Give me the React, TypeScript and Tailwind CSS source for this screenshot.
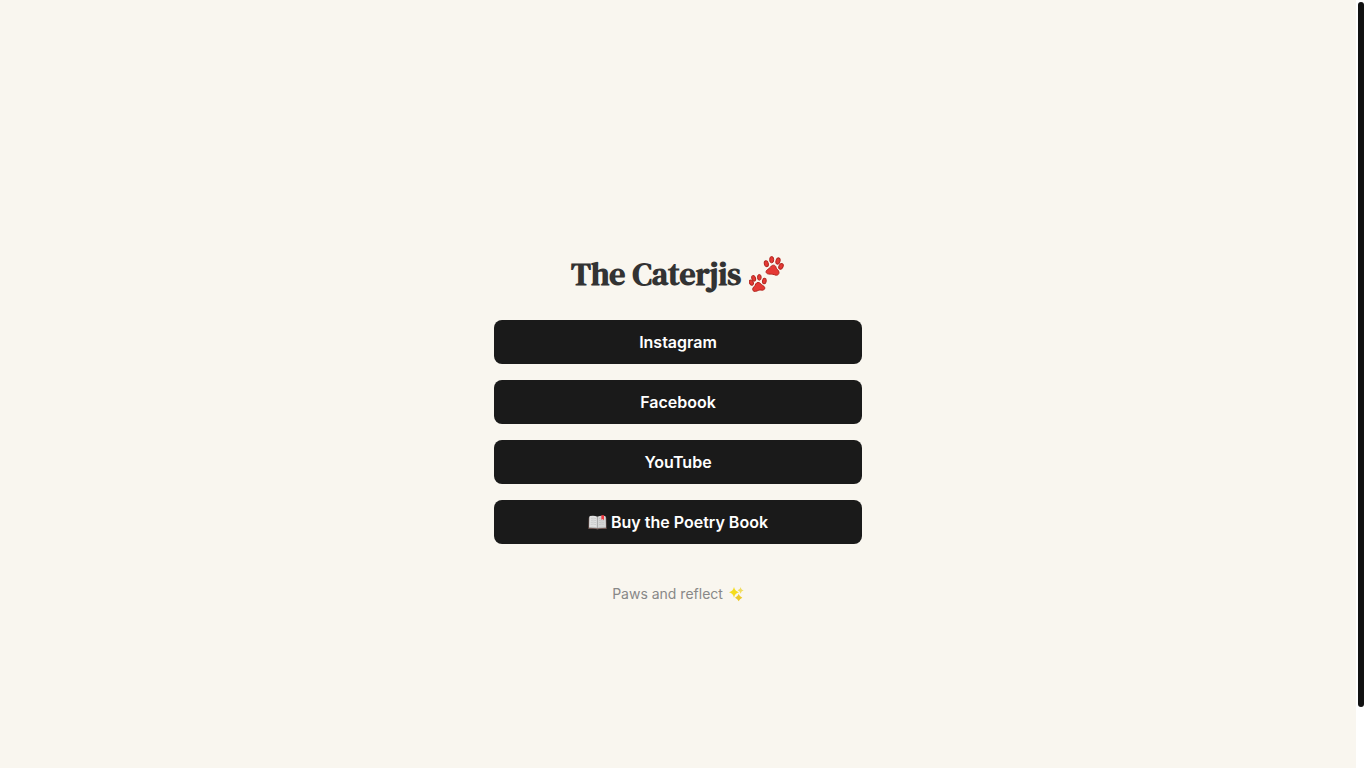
import React from 'react';

const PawPrints: React.FC = () => (
  <svg role="img" aria-label="Paw prints" viewBox="30 18 108 108" className="size-9 shrink-0">
    <g fill="#e53935" stroke="#b3261f" strokeWidth="3" strokeLinejoin="round">
      <ellipse cx="82" cy="41" rx="6" ry="9" transform="rotate(-12 82 41)" />
      <ellipse cx="98" cy="29" rx="6" ry="9.5" />
      <ellipse cx="117" cy="33" rx="6" ry="9.5" transform="rotate(16 117 33)" />
      <ellipse cx="126" cy="49" rx="6" ry="9" transform="rotate(26 126 49)" />
      <path d="M97 48C103 43 110 46 111 52C112 58 120 61 120 67C120 76 112 77 106 74C99 72 95 73 90 72C82 72 79 66 83 61C87 57 93 55 97 48Z" />
      <ellipse cx="37" cy="98" rx="5.5" ry="8" transform="rotate(-28 37 98)" />
      <ellipse cx="44" cy="85" rx="5.5" ry="8.5" transform="rotate(-18 44 85)" />
      <ellipse cx="61" cy="82" rx="5.5" ry="8.5" />
      <ellipse cx="76" cy="93" rx="5.5" ry="8.5" transform="rotate(8 76 93)" />
      <path d="M50 102C53 96 61 96 65 101C68 106 75 107 77 112C79 119 72 122 66 120C60 119 56 123 50 124C43 126 39 120 42 114C44 110 49 108 50 102Z" />
    </g>
  </svg>
);

const Sparkles: React.FC = () => (
  <svg role="img" aria-label="Sparkles" viewBox="18 18 45 45" className="size-[15px] shrink-0">
    <path fill="#f4dc1c" d="M33 18Q36 31 48 34Q36 37 33 50Q30 37 18 34Q30 31 33 18Z" />
    <path fill="#f0dc60" d="M53 18Q54 27 62 28Q54 30 53 38Q51 30 44 28Q51 27 53 18Z" />
    <path fill="#ecc92a" d="M47 39Q50 47 58 50Q50 53 47 61Q44 53 36 50Q44 47 47 39Z" />
  </svg>
);

const OpenBook: React.FC = () => (
  <svg role="img" aria-label="Open book" viewBox="0 0 57 45" className="h-[15px] w-[19px] shrink-0">
    <path fill="#6f5550" d="M2 8L6 5L28 9L51 5L55 8L56 42L32 42Q28 45 25 42L1 42Z" />
    <path fill="#bdbdbd" d="M4 5L27 7L30 7L53 5L54 38L31 40L26 40L3 38Z" />
    <path fill="#e2e2e2" d="M5 3Q19 0 28 5L28 38Q19 33 4 36Z" />
    <path fill="#d6d6d6" d="M28 5Q38 0 52 3L53 36Q38 33 28 38Z" />
    <path fill="none" stroke="#b5b5b5" strokeWidth="1.5" d="M9 10Q18 8 24 11M9 16Q18 14 24 17M8 22Q18 20 24 23M8 28Q18 26 24 29M33 11L38 9M33 17Q40 14 48 16M33 23Q40 20 48 22M33 29Q40 26 48 28" />
    <path fill="none" stroke="#8d8d8d" strokeWidth="2" d="M28 5V39" />
    <path fill="#f23b43" d="M40 1L48 1L48 16L44 12L40 14Z" />
  </svg>
);

const links = [
  { label: 'Instagram', href: '#instagram' },
  { label: 'Facebook', href: '#facebook' },
  { label: 'YouTube', href: '#youtube' },
  { label: 'Buy the Poetry Book', href: '#poetry-book', icon: OpenBook },
];

const App: React.FC = () => {
  return (
    <div className="flex min-h-screen bg-[#f9f6ef] font-['Inter',sans-serif]">
      <main className="flex flex-1 flex-col items-center justify-center px-4 pt-22 text-center">
        <h1 className="mb-6 flex items-center gap-2 text-[32px] leading-11 font-bold text-[#333333] font-['DM_Serif_Text','Liberation_Serif',serif]">
          The Caterjis
          <PawPrints />
        </h1>
        <nav className="flex w-full max-w-[368px] flex-col gap-4">
          {links.map((link) => {
            const Icon = link.icon;
            return (
              <a
                key={link.href}
                href={link.href}
                className="flex items-center justify-center gap-1 rounded-lg bg-[#1a1a1a] px-4 py-2.5 text-base font-semibold text-white hover:bg-[#333333]"
              >
                {Icon && <Icon />}
                {link.label}
              </a>
            );
          })}
        </nav>
        <footer className="mt-10 flex items-center gap-1.5 text-sm text-[#888888]">
          Paws and reflect
          <Sparkles />
        </footer>
      </main>
      <div className="w-2.5 bg-white p-0.5" aria-hidden="true">
        <div className="h-[calc(100vh-63px)] rounded-full bg-[#111111]" />
      </div>
    </div>
  );
};

export default App;
